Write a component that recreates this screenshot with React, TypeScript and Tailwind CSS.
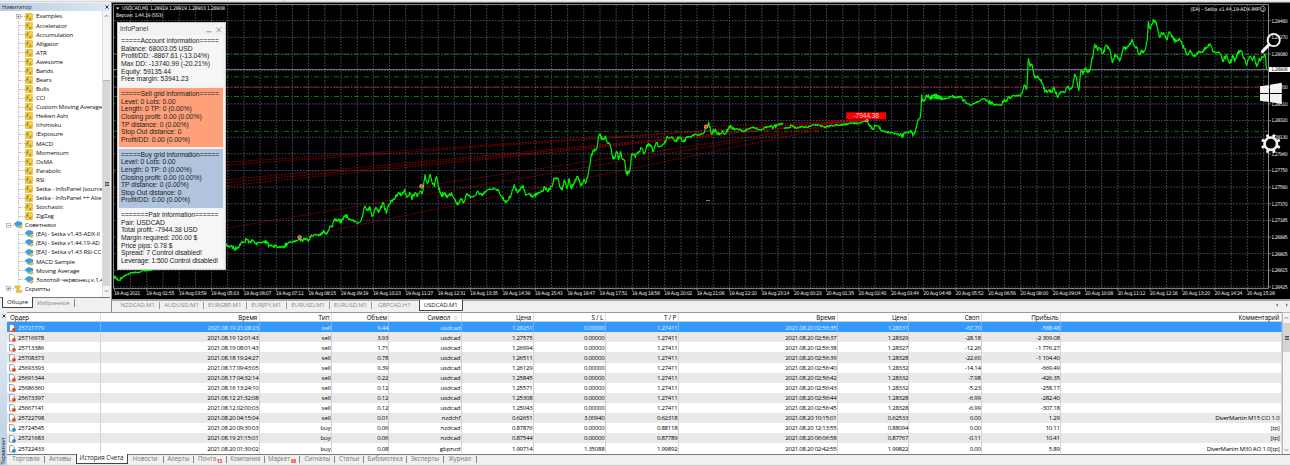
import React from "react";

const INDICATORS = [
  "Examples", "Accelerator", "Accumulation", "Alligator", "ATR", "Awesome", "Bands", "Bears", "Bulls", "CCI",
  "Custom Moving Average", "Heiken Ashi", "Ichimoku", "iExposure", "MACD", "Momentum", "OsMA", "Parabolic", "RSI",
  "Setka - InfoPanel (source", "Setka - InfoPanel ++ Alte", "Stochastic", "ZigZag",
];
const EXPERTS = [
  "(EA) - Setka v1.43-ADX-II", "(EA) - Setka v1.44.19-AD", "[EA] - Setka v1.43 RSI-CC",
  "MACD Sample", "Moving Average", "Золотой червонец v.1.4",
];

const TIMES = [
  "19 Aug 2021", "19 Aug 02:55", "19 Aug 03:59", "19 Aug 05:03", "19 Aug 06:07", "19 Aug 07:11", "19 Aug 08:15",
  "19 Aug 09:19", "19 Aug 10:23", "19 Aug 11:27", "19 Aug 12:31", "19 Aug 13:35", "19 Aug 14:39", "19 Aug 15:43",
  "19 Aug 16:47", "19 Aug 17:51", "19 Aug 18:58", "19 Aug 20:02", "19 Aug 21:06", "19 Aug 22:10", "19 Aug 23:14",
  "20 Aug 00:23", "20 Aug 01:35", "20 Aug 02:40", "20 Aug 03:44", "20 Aug 04:48", "20 Aug 05:52", "20 Aug 06:56",
  "20 Aug 08:00", "20 Aug 09:04", "20 Aug 10:08", "20 Aug 11:12", "20 Aug 12:16", "20 Aug 13:20", "20 Aug 14:24",
  "20 Aug 15:28",
];
const PRICES = [
  "1.29460", "1.29270", "1.29080", "", "1.28700", "1.28510", "1.28320", "1.28130", "1.27940", "1.27750", "1.27560",
  "1.27370", "1.27185", "1.26995", "1.26805", "1.26615", "1.26425",
];

/* Quote samples, three units per pixel, grouped by segment origin. */
const SEG_A = [342, 828, 350, 836, 358, 840, 368, 830, 384, 822, 400, 817, 415, 818, 430, 812, 450, 811, 470, 806, 520, 780, 580, 750, 630, 745, 675, 732];
const SEG_B = [0, 732, 8, 738, 18, 738, 28, 746, 38, 742, 48, 730, 56, 728, 65, 717, 72, 726, 82, 722, 92, 730, 100, 726, 112, 728, 120, 724, 132, 736, 145, 737, 155, 742, 175, 740, 190, 728, 210, 724, 224, 716, 232, 722, 238, 715, 248, 720, 260, 708, 272, 704, 285, 706, 298, 694, 306, 698, 313, 684, 320, 682, 330, 656, 340, 662, 350, 664, 363, 644, 370, 658, 385, 660, 397, 670, 408, 662, 414, 640, 420, 618, 428, 630, 436, 622, 441, 650, 452, 622, 460, 636, 466, 626, 475, 610, 484, 640, 492, 612, 505, 596, 515, 590, 522, 578, 530, 584, 538, 570, 545, 588, 555, 580, 560, 596, 570, 578, 576, 590, 584, 578, 592, 580, 600, 524, 608, 550, 616, 524, 622, 550, 628, 560, 634, 530, 640, 560, 648, 584, 658, 582, 668, 590, 680, 578, 688, 594, 696, 614, 706, 600, 716, 606, 726, 580, 736, 592, 748, 588, 760, 576, 772, 588, 784, 572, 796, 568, 808, 565, 822, 572, 830, 590, 844, 606, 856, 590, 868, 554, 876, 574, 884, 572, 894, 556, 902, 586, 914, 580, 926, 590, 940, 580, 952, 572, 960, 562, 970, 574, 980, 560, 988, 534, 1000, 536, 1004, 560, 1012, 570, 1018, 540, 1026, 566, 1032, 536, 1038, 565, 1048, 545, 1058, 532, 1068, 558, 1076, 540];
const SEG_C = [2, 550, 10, 520, 18, 470, 24, 450, 34, 450, 43, 402, 52, 418, 60, 410, 68, 430, 76, 436, 82, 470, 88, 476, 96, 455, 100, 480, 106, 455, 112, 478, 118, 480, 124, 522, 134, 515, 140, 464, 150, 470, 158, 456, 170, 444, 176, 462, 190, 430, 198, 436, 204, 456, 214, 430, 222, 440, 238, 432, 248, 412, 262, 412, 270, 424, 282, 414, 296, 426, 304, 412, 318, 410, 330, 402, 345, 405, 358, 398, 364, 380, 372, 370, 378, 400, 390, 390, 400, 404, 412, 392, 420, 402, 430, 385, 438, 378, 446, 388, 460, 388, 475, 394, 488, 388, 500, 382, 515, 386, 528, 390, 540, 382, 555, 380, 565, 384, 575, 374, 595, 370];
const SEG_D = [598, 384, 610, 383, 620, 376, 632, 384, 650, 380, 668, 382, 680, 376, 700, 374, 720, 382, 740, 376, 760, 376, 780, 373, 800, 370, 820, 370, 835, 365, 848, 362, 856, 378, 862, 388, 872, 376, 880, 378, 888, 392, 905, 396, 925, 400, 940, 402, 950, 408, 960, 400, 975, 396, 985, 404, 992, 388, 998, 365, 1000, 358, 1006, 352, 1008, 330, 1010, 284, 1014, 304, 1022, 292, 1030, 284, 1036, 298, 1045, 284, 1055, 292, 1065, 290, 1072, 298];
const SEG_E = [0, 292, 14, 284, 24, 292, 40, 298, 55, 294, 68, 286, 76, 292, 94, 290, 106, 308, 120, 316, 135, 308, 148, 304, 160, 296, 175, 304, 190, 314, 212, 314, 222, 302, 232, 300, 245, 288, 270, 286, 276, 280, 282, 256, 290, 268, 292, 240, 295, 176, 300, 200, 306, 192, 312, 225, 318, 235, 325, 230, 338, 250, 346, 275, 356, 270, 364, 275, 372, 264, 382, 290, 394, 274, 405, 276, 414, 258, 420, 268, 428, 262, 434, 222, 440, 235, 446, 272, 452, 216, 460, 220, 466, 205, 474, 218, 482, 202, 490, 160, 494, 132, 502, 150, 510, 144, 520, 160, 528, 135, 536, 142, 542, 162, 548, 188, 556, 164, 564, 176, 570, 180, 580, 140, 586, 150, 596, 140, 606, 118, 612, 138, 620, 140, 628, 162, 634, 150, 640, 158, 648, 140, 652, 120, 655, 65, 660, 85, 670, 58, 680, 75, 688, 112, 695, 100, 704, 105, 710, 120, 718, 95, 726, 112, 736, 124, 746, 116, 756, 132, 764, 148, 774, 165, 782, 152, 792, 168, 804, 156, 818, 158, 828, 142, 838, 132, 850, 156, 866, 156, 874, 166, 878, 185, 888, 168, 898, 188, 905, 180, 908, 165, 914, 186, 920, 164, 930, 152, 936, 154, 942, 175, 950, 196, 958, 170, 966, 180, 972, 168, 980, 200, 986, 182, 994, 176, 1000, 170, 1006, 166, 1010, 208];

function toPoints(seg: number[], ox: number): [number, number][] {
  const out: [number, number][] = [];
  for (let i = 0; i < seg.length; i += 2) out.push([ox + seg[i] / 3, seg[i + 1] / 3]);
  return out;
}

function tickPath(pts: [number, number][]): string {
  let d = "";
  let n = 7;
  for (let i = 0; i < pts.length - 1; i++) {
    const [x0, y0] = pts[i];
    const [x1, y1] = pts[i + 1];
    const steps = Math.max(1, Math.round((x1 - x0) / 0.5));
    const quiet = Math.abs(y1 - y0) < 3 && x1 - x0 > 3.4;
    for (let s = 0; s < steps; s++) {
      n = (n * 16807) % 2147483647;
      const r = (n / 2147483647 - 0.5) * (quiet ? 1.5 : 4.2);
      const t = s / steps;
      d += `${d ? "L" : "M"}${(x0 + (x1 - x0) * t).toFixed(1)} ${(y0 + (y1 - y0) * t + (s ? r : 0)).toFixed(1)}`;
    }
  }
  const last = pts[pts.length - 1];
  return `${d}L${last[0]} ${last[1]}`;
}

const LINES = [
  tickPath(toPoints(SEG_A, 0)),
  tickPath([...toPoints(SEG_B, 225), ...toPoints(SEG_C, 585)]),
  tickPath([...toPoints(SEG_D, 585), ...toPoints(SEG_E, 930)]),
];

const DEALS: number[][] = [
  [114, 169.7], [114, 172.8], [114, 190.3], [114, 193.8], [114, 197.4], [114, 247.3], [299.5, 237.3], [421.3, 186.3], [706, 126.7],
];

function Chart() {
  return (
    <svg className="block h-[297px] w-[1178px]" viewBox="112 2 1178 297">
      <rect x="112" y="2" width="1178" height="297" fill="#000" />
      <rect x="112" y="2" width="1178" height="1" fill="#777" />
      <g stroke="#566679" strokeWidth="0.85" strokeDasharray="1.7 1.3" opacity="0.9">
        {Array.from({ length: 71 }, (_, i) => {
          const x = 130.6 + i * 16.185;
          return <line key={i} x1={x} x2={x} y1="5" y2="288" />;
        })}
        {PRICES.map((_, i) => (
          <line key={i} x1="114" x2="1268" y1={20.7 + i * 16.64} y2={20.7 + i * 16.64} />
        ))}
      </g>
      <g stroke="#118011" strokeWidth="0.9" strokeDasharray="5 2 1 2">
        <line x1="114" x2="1268" y1="54.3" y2="54.3" />
        <line x1="114" x2="1268" y1="76.8" y2="76.8" />
        <line x1="114" x2="1268" y1="96.5" y2="96.5" />
        <line x1="114" x2="1268" y1="131.3" y2="131.3" />
      </g>
      <line x1="114" x2="1268" y1="87.1" y2="87.1" stroke="#b81818" strokeWidth="1" strokeDasharray="5 2 1 2" />
      <line x1="114" x2="1268" y1="69.5" y2="69.5" stroke="#68727d" strokeWidth="1" />
      <g stroke="#c60000" strokeWidth="0.7" strokeDasharray="1.6 1.2">
        {DEALS.map(([x, y], i) => (
          <line key={i} x1={x} y1={y} x2="866" y2="120" />
        ))}
      </g>
      <g fill="none" stroke="#00f400" strokeWidth="1.2" strokeLinejoin="round">
        {LINES.map((d, i) => (
          <path key={i} d={d} />
        ))}
      </g>
      <g fill="#ff2a1a" stroke="#ffb0a8" strokeWidth="0.9">
        <circle cx="299.6" cy="237.3" r="1.7" />
        <circle cx="421.3" cy="186.3" r="1.7" />
        <circle cx="706" cy="126.7" r="1.7" />
        <circle cx="867" cy="120.4" r="1.3" />
      </g>
      <rect x="706" y="200" width="4" height="0.9" fill="#9a9a00" />
      <rect x="846.3" y="112.3" width="39.7" height="7" fill="#ff0000" />
      <text x="853.5" y="118.4" fontSize="6.6" textLength="25.5" fill="#ffd0d0" fontFamily="Liberation Sans, sans-serif">-7944.38</text>
      <path d="M113.5 288.6V4.6H1268.5V288.6Z" fill="none" stroke="#9a9a9a" strokeWidth="0.9" />
      <g fontFamily="DejaVu Sans Condensed, DejaVu Sans, sans-serif" fill="#e6e6e6" fontSize="5.2">
        <path d="M116 7.6h3.4l-1.7 2z" fill="#fff" />
        <text x="122" y="10.2" textLength="103">USDCAD,M1  1.28919 1.28919 1.28903 1.28908</text>
        <text x="116" y="16.9" textLength="47">Версия: 1.44.19 (SS3)</text>
        <text x="1190.6" y="10.8" textLength="69">(EA) - Setka v1.44.19-ADX-IMP</text>
        <circle cx="1262.8" cy="9" r="2.6" fill="none" stroke="#e6e6e6" strokeWidth="0.6" />
        <path d="M1261.8 8.2v.5M1263.8 8.2v.5M1261.4 9.8q1.4 1.4 2.8 0" fill="none" stroke="#e6e6e6" strokeWidth="0.6" />
        {PRICES.map((p, i) => (
          <g key={i}>
            <path d={`M1268.5 ${20.7 + i * 16.64}h2.4`} stroke="#9a9a9a" strokeWidth="0.8" />
            {p && <text x="1271.3" y={22.6 + i * 16.64} textLength="16.5">{p}</text>}
          </g>
        ))}
        <rect x="1269" y="67" width="21" height="5" fill="#fff" />
        <text x="1271.3" y="71.4" textLength="16.5" fill="#222">1.28908</text>
        {TIMES.map((t, i) => (
          <g key={t + i}>
            <path d={`M${114.4 + i * 32.37} 288.5v2.3`} stroke="#9a9a9a" strokeWidth="0.8" />
            <text x={114 + i * 32.37} y="295.2" textLength={i ? 28 : 26.3}>{t}</text>
          </g>
        ))}
      </g>
      <circle cx="1273.7" cy="40" r="6.1" fill="none" stroke="#f2f2f2" strokeWidth="1.9" />
      <path d="M1269 44.6L1262.4 51.6" stroke="#f2f2f2" strokeWidth="3" strokeLinecap="round" />
      <path d="M1260 86.2L1269 84.9V93H1260ZM1270 84.8L1281.8 82.7V93H1270ZM1260 94H1269V101.9L1260 100.7ZM1270 94H1281.8V104.1L1270 102Z" fill="#f2f2f2" />
      <g transform="translate(1270.8 143.7)">
        <circle r="6.2" fill="#000" stroke="#f2f2f2" strokeWidth="2.6" />
        {[22.5, 67.5, 112.5, 157.5, 202.5, 247.5, 292.5, 337.5].map((a) => (
          <rect key={a} x="-1.4" y="-9.8" width="2.8" height="3.4" fill="#f2f2f2" transform={`rotate(${a})`} />
        ))}
      </g>
    </svg>
  );
}

function IndicatorIcon() {
  return (
    <svg className="h-[8px] w-[8px] shrink-0" viewBox="0 0 8 8">
      <rect x="0.3" y="0.3" width="7.2" height="7.4" rx="0.8" fill="#f3d048" stroke="#d5a514" strokeWidth="0.5" />
      <path d="M3.6 1.5Q2.4 1.3 2.3 3L2 5.7M1.5 3.3H3.4M4.2 4.6L6.3 6.8M6.3 4.6L4.2 6.8" stroke="#6b5618" strokeWidth="0.6" fill="none" />
    </svg>
  );
}

function ExpertIcon() {
  return (
    <svg className="h-[8px] w-[9px] shrink-0" viewBox="0 0 9 8">
      <path d="M0.2 2.6L3.6 0.3L7.8 1.6L8.2 3.6L4.7 5.2L1.4 4.4Z" fill="#3b9fe0" stroke="#2478b4" strokeWidth="0.4" />
      <path d="M1.8 4.2V5.9L4.7 7.1L6.8 5.7V4L4.7 5.2Z" fill="#65bdf0" />
      <path d="M6.6 3.8L8.7 5.7L6.6 7.8L4.6 5.9Z" fill="#efbf28" stroke="#9d8a38" strokeWidth="0.3" />
    </svg>
  );
}

function Expander({ plus }: { plus?: boolean }) {
  return (
    <svg className="h-[5px] w-[5px] shrink-0" viewBox="0 0 5 5">
      <rect x="0.4" y="0.4" width="4.2" height="4.2" fill="#fff" stroke="#999" strokeWidth="0.6" />
      <path d={plus ? "M1.3 2.5H3.7M2.5 1.3V3.7" : "M1.3 2.5H3.7"} stroke="#555" strokeWidth="0.6" />
    </svg>
  );
}

function Arrow({ up }: { up?: boolean }) {
  return (
    <svg className="h-[4px] w-[5px]" viewBox="0 0 5 4">
      <path d={up ? "M0.8 2.8L2.5 1.1L4.2 2.8" : "M0.8 1.2L2.5 2.9L4.2 1.2"} fill="none" stroke="#555" strokeWidth="0.7" />
    </svg>
  );
}

function Navigator() {
  return (
    <aside className="flex h-[307px] w-[110px] flex-col">
      <div className="flex h-[8px] items-center justify-between bg-gradient-to-r from-[#b9cde2] to-[#dce7f3] pl-[2px] pr-[1px] text-[6px] tracking-[-0.15px] text-[#333]">
        <span>Навигатор</span>
        <svg className="h-[4px] w-[4px]" viewBox="0 0 4 4"><path d="M.5 .5L3.5 3.5M3.5 .5L.5 3.5" stroke="#222" strokeWidth="0.9" /></svg>
      </div>
      <div className="flex h-[287px] border-b border-[#777] bg-white pl-[1px]">
        <div className="w-[101px] overflow-hidden whitespace-nowrap pt-[1px] text-[6.15px] tracking-[-0.16px] text-[#111]">
          {INDICATORS.map((name, i) => (
            <div key={name} className="flex h-[9.09px] items-center">
              <span className="flex h-full w-[24px] shrink-0 items-center pl-[15px]">
                {i === 0 ? <Expander plus /> : <span className="ml-[2px] h-full w-px border-l border-dotted border-[#bbb]" />}
                <span className="h-px flex-1 border-t border-dotted border-[#bbb]" />
              </span>
              <IndicatorIcon />
              <span className="ml-[3px]">{name}</span>
            </div>
          ))}
          <div className="flex h-[9.09px] items-center">
            <span className="flex w-[13px] shrink-0 items-center pl-[5px]"><Expander /><span className="h-px flex-1 border-t border-dotted border-[#bbb]" /></span>
            <ExpertIcon />
            <span className="ml-[2px]">Советники</span>
          </div>
          {EXPERTS.map((name) => (
            <div key={name} className="flex h-[9.09px] items-center">
              <span className="flex h-full w-[24px] shrink-0 items-center pl-[17px]">
                <span className="h-full w-px border-l border-dotted border-[#bbb]" />
                <span className="h-px flex-1 border-t border-dotted border-[#bbb]" />
              </span>
              <ExpertIcon />
              <span className="ml-[2px]">{name}</span>
            </div>
          ))}
          <div className="flex h-[9.09px] items-center">
            <span className="flex w-[13px] shrink-0 items-center pl-[5px]"><Expander plus /><span className="h-px flex-1 border-t border-dotted border-[#bbb]" /></span>
            <svg className="h-[8px] w-[9px]" viewBox="0 0 9 8">
              <path d="M1 .8H6V3H4.8V5.2H7.5V7.4H2.4V5.2H3V3H1Z" fill="#f0c540" stroke="#c89a1c" strokeWidth="0.5" />
            </svg>
            <span className="ml-[2px]">Скрипты</span>
          </div>
        </div>
        <div className="flex w-[8px] flex-col items-center border-l border-[#ddd] bg-[#f3f3f3] py-[3px]">
          <Arrow up />
          <div className="mt-[62px] flex h-[206px] w-full flex-col items-center justify-center border-t border-[#b5b5b5] bg-[#d6d6d6]">
            <span className="h-[4px] w-[4px] border-y border-[#555] bg-[#999]" />
          </div>
          <span className="pt-[3px]"><Arrow /></span>
        </div>
      </div>
      <div className="flex h-[12px] pl-[2px] text-[6.1px]">
        <span className="-mt-px flex h-[11px] w-[31px] items-center justify-center border border-t-0 border-[#444] bg-white pt-[1px] text-[#222]">Общие</span>
        <span className="ml-[4px] mt-[1px] flex h-[8px] items-center border-r border-[#888] pr-[4px] tracking-[-0.06px] text-[#888]">Избранное</span>
      </div>
    </aside>
  );
}

const INFO: { cls: string; rows: string[] }[] = [
  { cls: "h-[50px] bg-[#f6f6f6]", rows: ["=====Account information=====", "Balance: 68003.05 USD", "Profit/DD: -8867.61 (-13.04%)", "Max DD: -13740.99 (-20.21%)", "Equity: 59135.44", "Free margin: 53941.23"] },
  { cls: "mt-[3px] h-[59px] bg-[#ffa07a]", rows: ["=====Sell grid information=====", "Level: 0 Lots: 0.00", "Length: 0 TP: 0 (0.00%)", "Closing profit: 0.00 (0.00%)", "TP distance: 0 (0.00%)", "Stop Out distance: 0", "Profit/DD: 0.00 (0.00%)"] },
  { cls: "mt-[1.5px] h-[59px] bg-[#b0c4de]", rows: ["=====Buy grid information=====", "Level: 0 Lots: 0.00", "Length: 0 TP: 0 (0.00%)", "Closing profit: 0.00 (0.00%)", "TP distance: 0 (0.00%)", "Stop Out distance: 0", "Profit/DD: 0.00 (0.00%)"] },
  { cls: "mt-[1.5px] h-[59px] bg-[#f6f6f6]", rows: ["=======Pair information======", "Pair: USDCAD", "Total profit: -7944.38 USD", "Margin required: 200.00 $", "Price pips: 0.78 $", "Spread: 7 Control disabled!", "Leverage: 1:500 Control disabled!"] },
];

function InfoPanel() {
  return (
    <div className="absolute left-[4.5px] top-[20px] h-[248px] w-[109px] border border-[#c8c8c8] bg-[#f2f2f2] px-[1.5px] font-['Liberation_Sans',Arial,sans-serif] text-[6.75px] tracking-[-0.04px] text-[#222]">
      <div className="flex h-[12px] items-center justify-between pl-[1px] pr-[1px] pt-[1px] text-[#444]">
        <span>InfoPanel</span>
        <svg className="h-[6px] w-[16px]" viewBox="0 0 16 6"><path d="M0.5 4.8H5.5M10.5 .6L15 5.1M15 .6L10.5 5.1" fill="none" stroke="#777" strokeWidth="0.8" /></svg>
      </div>
      {INFO.map((b, i) => (
        <div key={i} className={`${b.cls} overflow-hidden whitespace-nowrap pl-[2px] pt-[2.3px]`}>
          {b.rows.map((r) => (
            <div key={r} className={`h-[7.6px] leading-[7.6px] ${r.startsWith("Leverage") ? "tracking-[-0.13px]" : ""}`}>{r}</div>
          ))}
        </div>
      ))}
    </div>
  );
}

const CHART_TABS = [
  ["NZDCAD,M1", "w-[43.5px]"], ["AUDUSD,M1", "w-[44px]"], ["EURGBP,M1", "w-[42.5px]"], ["EURJPY,M1", "w-[40.5px]"],
  ["EURUSD,M1", "w-[43px]"], ["EURUSD,M1", "w-[42px]"], ["GBPCAD,H1", "w-[44.5px]"],
];

const COLS = "grid grid-cols-[93.7px_159px_72.3px_57.5px_72.2px_72px_72px_73px_159px_71.8px_72.5px_79px_221px]";

const HEAD = ["Ордер", "Время", "Тип", "Объем", "Символ", "Цена", "S / L", "T / P", "Время", "Цена", "Своп", "Прибыль", "Комментарий"];
const ROWS: string[][] = [
  ["25721779", "2021.08.19 21:28:23", "sell", "9.44", "usdcad", "1.28251", "0.00000", "1.27411", "2021.08.20 02:56:35", "1.28331", "-67.70", "-588.48", ""],
  ["25716978", "2021.08.19 12:01:43", "sell", "3.93", "usdcad", "1.27575", "0.00000", "1.27411", "2021.08.20 02:56:37", "1.28329", "-28.18", "-2 309.08", ""],
  ["25713386", "2021.08.19 08:01:43", "sell", "1.71", "usdcad", "1.26994", "0.00000", "1.27411", "2021.08.20 02:56:38", "1.28327", "-12.26", "-1 776.27", ""],
  ["25708373", "2021.08.18 19:24:27", "sell", "0.78", "usdcad", "1.26511", "0.00000", "1.27411", "2021.08.20 02:56:39", "1.28328", "-22.60", "-1 104.40", ""],
  ["25693393", "2021.08.17 09:43:05", "sell", "0.39", "usdcad", "1.26129", "0.00000", "1.27411", "2021.08.20 02:56:40", "1.28332", "-14.14", "-669.49", ""],
  ["25691344", "2021.08.17 04:32:14", "sell", "0.22", "usdcad", "1.25845", "0.00000", "1.27411", "2021.08.20 02:56:42", "1.28332", "-7.98", "-426.35", ""],
  ["25686360", "2021.08.16 13:24:10", "sell", "0.12", "usdcad", "1.25571", "0.00000", "1.27411", "2021.08.20 02:56:43", "1.28332", "-5.23", "-258.17", ""],
  ["25673397", "2021.08.12 21:32:08", "sell", "0.12", "usdcad", "1.25308", "0.00000", "1.27411", "2021.08.20 02:56:44", "1.28328", "-6.99", "-282.40", ""],
  ["25667141", "2021.08.12 02:00:03", "sell", "0.12", "usdcad", "1.25043", "0.00000", "1.27411", "2021.08.20 02:56:45", "1.28328", "-6.99", "-307.18", ""],
  ["25722798", "2021.08.20 04:15:04", "sell", "0.01", "nzdchf", "0.62651", "3.00940", "0.62318", "2021.08.20 10:15:01", "0.62533", "0.00", "1.29", "DiverMartin M15 CCI 1.0"],
  ["25724545", "2021.08.20 09:30:03", "buy", "0.06", "nzdcad", "0.87876", "0.00000", "0.88118", "2021.08.20 12:13:55", "0.88094", "0.00", "10.11", "[tp]"],
  ["25721683", "2021.08.19 21:15:01", "buy", "0.06", "nzdcad", "0.87544", "0.00000", "0.87789", "2021.08.20 06:06:58", "0.87767", "-0.11", "10.41", "[tp]"],
  ["25722433", "2021.08.20 01:30:02", "buy", "0.08", "gbpnzd", "1.99714", "1.35088", "1.99892", "2021.08.20 02:42:55", "1.99822", "0.00", "5.89", "DiverMartin M30 AO 1.0[tp]"],
];

function OrderIcon({ buy }: { buy: boolean }) {
  return (
    <svg className="h-[8px] w-[7px] shrink-0" viewBox="0 0 7 8">
      <path d="M.5 .5H3.8L5.3 2V7H.5Z" fill="#fff" stroke="#777" strokeWidth="0.7" />
      <circle cx="5" cy="5.8" r="1.9" fill={buy ? "#2a86cf" : "#dc4a20"} />
    </svg>
  );
}

function cellText(i: number): string {
  if (i === 0) return "ml-[2px] tracking-[-0.22px]";
  if (i === 12) return "tracking-[-0.2px]";
  if (i === 2 || i === 4) return "tracking-[-0.08px]";
  return "tracking-[-0.3px]";
}

function HistoryTable() {
  return (
    <div className="h-[141.5px] w-[1275px] overflow-hidden border-t border-[#999] bg-white text-[6.1px] text-black">
      <div className={`${COLS} h-[9.3px] border-b border-[#ccc] text-[6.2px]`}>
        {HEAD.map((h, i) => (
          <div key={i} className={`flex items-center border-r border-[#ddd] pt-[1.4px] tracking-[-0.08px] ${i ? "justify-end pr-[1.5px]" : "pl-[3px]"}`}>
            {h}
            {i === 4 && <span className="ml-[4px] mr-[1px] text-[4.5px] text-[#888]">▽</span>}
          </div>
        ))}
      </div>
      {ROWS.map((r, n) => (
        <div key={n} className={`${COLS} h-[10.07px] ${n === 0 ? "bg-[#3399ff] text-[#e2f0ff]" : n % 2 ? "bg-[#e9e9e9]" : "bg-white"}`}>
          {r.map((c, i) => (
            <div key={i} className={`flex items-center whitespace-nowrap border-r pt-[1px] ${n ? "border-[#d4d4d4]" : "border-[#6bb4ff]"} ${i === 12 ? "justify-end pr-[1.5px]" : i ? "justify-end pr-[0.3px]" : "pl-[2px]"}`}>
              {i === 0 && <OrderIcon buy={r[2] === "buy"} />}
              <span className={cellText(i)}>{c}</span>
            </div>
          ))}
        </div>
      ))}
    </div>
  );
}

const BOTTOM_TABS: [string, string, string?][] = [
  ["Новости", "w-[36px]"], ["Алерты", "w-[30.8px]"], ["Почта", "w-[32.5px]", "13"], ["Компания", "w-[38px]"],
  ["Маркет", "w-[35.5px]", "98"], ["Сигналы", "w-[35px]"], ["Статьи", "w-[29px]"], ["Библиотека", "w-[42.5px]"],
  ["Эксперты", "w-[37px]"], ["Журнал", "w-[33px]"],
];

function Terminal() {
  return (
    <section className="flex h-[154px] w-full">
      <div className="flex w-[7px] shrink-0 flex-col items-center justify-between bg-gradient-to-b from-[#e8eef5] to-[#b8cde4] pb-[1px]">
        <svg className="mt-[2px] h-[4px] w-[4px]" viewBox="0 0 4 4"><path d="M.5 .5L3.5 3.5M3.5 .5L.5 3.5" stroke="#222" strokeWidth="0.9" /></svg>
        <span className="rotate-180 text-[6px] leading-[7px] tracking-[-0.3px] text-[#222] [writing-mode:vertical-rl]">Терминал</span>
      </div>
      <div className="flex min-w-0 flex-1 flex-col">
        <div className="flex h-[141.5px]">
          <HistoryTable />
          <div className="flex w-[8px] flex-col items-center border-l border-t border-[#bbb] bg-[#f4f4f4] pb-[2px] pt-[3px]">
            <Arrow up />
            <div className="mt-[3px] flex h-[29px] w-full items-center justify-center bg-[#d4d4d4]">
              <span className="h-[4px] w-[4px] border-y border-[#555] bg-[#999]" />
            </div>
            <div className="flex-1" />
            <Arrow />
          </div>
        </div>
        <div className="flex h-[12.5px] items-start border-b border-t border-b-[#c8c8c8] border-t-[#777] text-[6.2px] tracking-[-0.06px] text-[#777]">
          <span className="ml-[1px] mt-[1px] flex h-[7px] w-[37px] items-center justify-center border-r border-[#888]">Торговля</span>
          <span className="mt-[1px] flex h-[7px] w-[30px] items-center justify-center">Активы</span>
          <span className="-mt-px ml-[0.5px] flex h-[10.5px] w-[52px] items-center justify-center border border-t-0 border-[#444] bg-white text-[#222]">История Счета</span>
          {BOTTOM_TABS.map(([t, w, badge]) => (
            <span key={t} className={`mt-[1px] flex h-[7px] items-center justify-center border-r border-[#888] ${w}`}>
              {t}
              {badge && <span className="ml-[1px] translate-y-[2px] text-[4.5px] font-bold text-[#f02020]">{badge}</span>}
            </span>
          ))}
        </div>
      </div>
    </section>
  );
}

export default function App() {
  return (
    <main className="flex h-[466px] w-[1290px] flex-col overflow-hidden bg-[#f0f0f0] font-['Open_Sans','Noto_Sans',sans-serif] leading-none">
      <div className="flex h-[2px] w-full border-b border-[#d8d8d8]">
        <span className="w-[152px] border-r border-[#bbb]" />
        <span className="w-[132px] border-r border-[#bbb]" />
      </div>
      <div className="flex h-[310px]">
        <div className="flex w-[112px] shrink-0 flex-col border-r border-[#8a8a8a] pt-[1px]">
          <Navigator />
        </div>
        <div className="flex w-[1178px] flex-col">
          <div className="relative h-[297px]">
            <Chart />
            <InfoPanel />
          </div>
          <div className="flex h-[13px] border-t-2 border-[#a4a4a4] text-[6.1px] text-[#888]">
            <span className="w-[4.5px]" />
            {CHART_TABS.map(([t, w], i) => (
              <span key={i} className={`mt-[1px] flex h-[6.5px] items-center justify-center tracking-[-0.1px] ${i < 6 ? "border-r border-[#999]" : ""} ${w}`}>{t}</span>
            ))}
            <span className="-mt-px ml-[2px] flex h-[10.5px] w-[44.5px] items-center justify-center border border-t-0 border-[#444] bg-white tracking-[-0.1px] text-[#222]">USDCAD,M1</span>
            <span className="flex-1" />
            <svg className="mr-[1px] mt-[2px] h-[4px] w-[14px]" viewBox="0 0 14 4"><path d="M3 .3V3.7L1 2ZM11 .3V3.7L13 2Z" fill="#777" /></svg>
          </div>
        </div>
      </div>
      <Terminal />
    </main>
  );
}
